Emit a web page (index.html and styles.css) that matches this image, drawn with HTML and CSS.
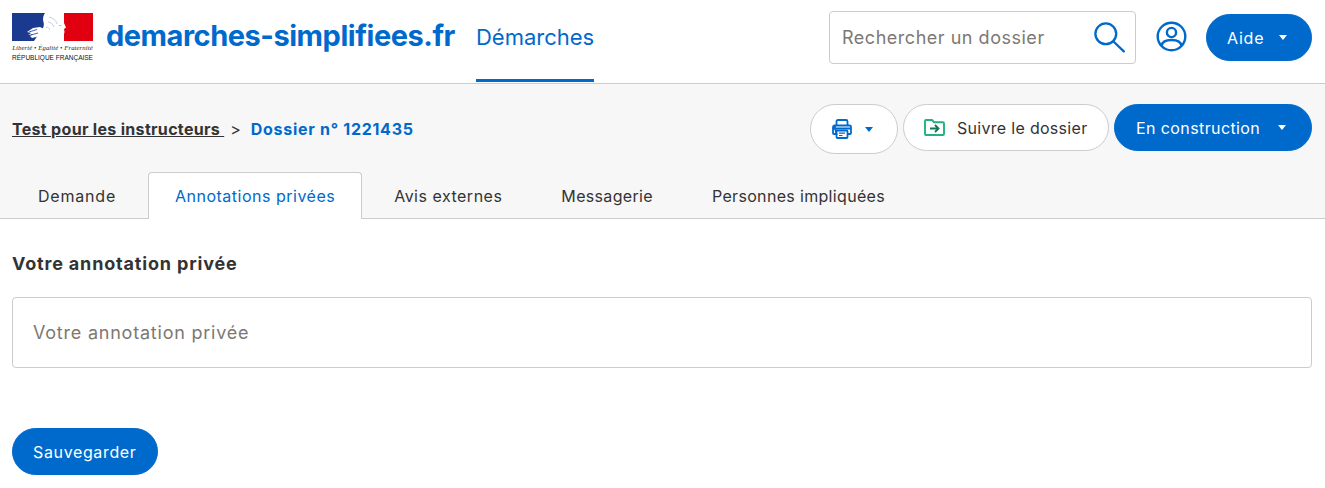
FILE: index.html
```html
<!DOCTYPE html>
<html lang="fr">
<head>
<meta charset="utf-8">
<title>Dossier</title>
<link rel="stylesheet" href="styles.css">
</head>
<body>
<header class="topbar">
  <div class="brand">
    <div class="logo">
      <svg class="logo-flag" width="81" height="28" viewBox="0 0 81 28">
        <rect width="81" height="28" fill="#fff"/>
        <path d="M0 0h33c-2 3-2.500 6-1.500 9 .5 2 .5 4-.5 6l-2 3-3 4-4 6H0z" fill="#1a3a8f"/>
        <path d="M52 0h29v28H52v-7l.5-2-.5-3 2-1.500-2-4.500z" fill="#e1000f"/>
        <path d="M15 19l6-4 7-1 4 2-3 3 3 1-4 3-8 2-2-2 3-2-5 1 3-2z" fill="#fff"/>
        <path d="M17 19l8-2.500M19 22l7-2" stroke="#1a3a8f" stroke-width=".8" fill="none"/>
        <path d="M37 4c4 1 7 3 8 7M36 9c3 .5 5 2 6 5M34 14c2 0 3 1 4 3" stroke="#b9c0dc" stroke-width=".8" fill="none"/>
        <path d="M47 12.500h2.500" stroke="#9aa" stroke-width=".7"/>
      </svg>
      <div class="logo-motto">Liberté • Égalité • Fraternité</div>
      <div class="logo-name">RÉPUBLIQUE FRANÇAISE</div>
    </div>
    <a class="site-name">demarches-simplifiees.fr</a>
    <a class="nav-tab">Démarches</a>
  </div>
  <div class="header-actions">
    <div class="search">
      <span class="search-text">Rechercher un dossier</span>
      <svg class="search-icon" width="31" height="31" viewBox="0 0 31 31" fill="none" stroke="#0069cc" stroke-width="2.300" stroke-linecap="round"><circle cx="11.800" cy="11.800" r="10.400"/><path d="M19.500 19.500L29.800 29.400"/></svg>
    </div>
    <svg class="user-icon" width="31" height="31" viewBox="0 0 31 31" fill="none" stroke="#0069cc" stroke-width="2.400"><circle cx="15.500" cy="15.500" r="13.800"/><circle cx="15.500" cy="11.500" r="4.600"/><path d="M5.500 25c.5-4 4-6 10-6s9.500 2 10 6"/></svg>
    <button class="btn btn-primary btn-help">Aide<span class="caret caret-white"></span></button>
  </div>
</header>

<section class="subheader">
  <div class="subheader-row">
    <nav class="breadcrumb">
      <a class="crumb-link">Test pour les instructeurs </a>
      <span class="crumb-sep">&gt;</span>
      <span class="crumb-current">Dossier n° 1221435</span>
    </nav>
    <div class="dossier-actions">
      <button class="btn btn-outline btn-print">
        <svg width="20" height="20" viewBox="0 0 20 20" fill="none" stroke="#0069cc"><path d="M4.500 7V2.500C4.500 1.600 5.100 1 6 1h8c.9 0 1.500.6 1.500 1.500V7" stroke-width="1.800"/><path d="M2.500 6.500h15C18.400 6.500 19 7.200 19 8.200V14c0 .5-.5 1-1 1h-2.500M4.500 15H2c-.5 0-1-.5-1-1V8.200c0-1 .6-1.700 1.500-1.700z" stroke-width="1.800"/><path d="M1 9.500h18" stroke-width="2"/><rect x="4.500" y="11.500" width="11" height="7.500" rx="1" stroke-width="1.800"/><path d="M7 14.200h6M7 16.500h3.500" stroke-width="1.200"/></svg>
        <span class="caret caret-blue"></span>
      </button>
      <button class="btn btn-outline btn-follow">
        <svg width="21" height="17" viewBox="0 0 21 17" fill="none"><path d="M1 15V2c0-.6.400-1 1-1h6l2 2.200h8.800c.7 0 1.200.5 1.200 1.200V15c0 .6-.4 1-1 1H2c-.6 0-1-.4-1-1z" stroke="#1fb27e" stroke-width="1.900"/><path d="M6 9.500h8M11 6l3.500 3.500L11 13" stroke="#127a55" stroke-width="1.900"/></svg>
        Suivre le dossier
      </button>
      <button class="btn btn-primary btn-status">En construction<span class="caret caret-white"></span></button>
    </div>
  </div>
  <nav class="tabs">
    <a class="tab tab-first">Demande</a>
    <a class="tab tab-active">Annotations privées</a>
    <a class="tab">Avis externes</a>
    <a class="tab tab-tight">Messagerie</a>
    <a class="tab tab-tight">Personnes impliquées</a>
  </nav>
</section>

<main class="content">
  <label class="field-label">Votre annotation privée</label>
  <div class="textarea">Votre annotation privée</div>
  <button class="btn btn-primary btn-save">Sauvegarder</button>
</main>
</body>
</html>
```
FILE: styles.css
```css
* { box-sizing: border-box; }
html, body { margin: 0; padding: 0; }
body {
  width: 1325px;
  height: 488px;
  overflow: hidden;
  background: #fff;
  color: #333;
  font-family: Inter, "Open Sans", sans-serif;
  font-size: 16px;
}
.topbar {
  height: 84px;
  padding: 0 13px 0 12px;
  display: flex;
  justify-content: space-between;
  align-items: flex-start;
  border-bottom: 1px solid #ccc;
}
.brand { display: flex; align-items: flex-start; }
.logo { width: 81px; margin-top: 13px; display: flex; flex-direction: column; align-items: center; }
.logo-flag { display: block; }
.logo-motto { font: italic 6.700px "Liberation Serif", serif; letter-spacing: .1px; color: #222; margin-top: 2px; height: 9px; line-height: 9px; white-space: nowrap; }
.logo-name { font: 6.500px "Liberation Sans", sans-serif; color: #111; margin-top: 1px; height: 10px; line-height: 10px; white-space: nowrap; }
.site-name {
  margin-left: 13px;
  margin-top: 15px;
  font-size: 29px;
  line-height: 42px;
  font-weight: 700;
  color: #0069cc;
  letter-spacing: -0.47px;
  white-space: nowrap;
}
.nav-tab {
  margin-left: 21px;
  padding-top: 22px;
  font-size: 22px;
  line-height: 30px;
  color: #0069cc;
  border-bottom: 3px solid #0069cc;
  width: 118px;
  height: 82px;
  white-space: nowrap;
}
.header-actions { display: flex; align-items: flex-start; }
.search {
  margin-top: 11px;
  width: 307px;
  height: 53px;
  border: 1px solid #ccc;
  border-radius: 4px;
  padding: 0 10px 0 12px;
  display: flex;
  align-items: center;
  justify-content: space-between;
}
.search-text { font-size: 18px; letter-spacing: .52px; color: #7d7873; }
.user-icon { margin: 21px 0 0 20px; }
.btn {
  font-family: inherit;
  font-size: 16px;
  border-radius: 30px;
  border: 1px solid #ccc;
  display: inline-flex;
  align-items: center;
  cursor: pointer;
  white-space: nowrap;
  padding: 0;
}
.btn-primary { background: #0069cc; border-color: #0069cc; color: #fff; }
.btn-outline { background: #fff; color: #333; }
.btn-help { margin: 14px 0 0 19px; width: 106px; height: 47px; padding-left: 20px; letter-spacing: .8px; }
.caret { display: inline-block; width: 0; height: 0; border-left: 4px solid transparent; border-right: 4px solid transparent; border-top: 5px solid; }
.caret-white { border-top-color: #fff; margin-left: 15px; }
.caret-blue { border-top-color: #0069cc; margin-left: 13px; }
.subheader {
  height: 135px;
  background: #f7f7f7;
  border-bottom: 1px solid #ccc;
  padding: 20px 13px 0 12px;
  display: flex;
  flex-direction: column;
  justify-content: space-between;
}
.subheader-row { display: flex; justify-content: space-between; align-items: flex-start; }
.breadcrumb { margin-top: 14px; display: flex; font-size: 16px; line-height: 22px; font-weight: 700; white-space: pre; }
.crumb-link { text-decoration: underline; color: #333; letter-spacing: .31px; }
.crumb-sep { margin-left: 6px; font-weight: 400; }
.crumb-current { margin-left: 10px; color: #0069cc; letter-spacing: .72px; }
.dossier-actions { display: flex; gap: 5px; align-items: flex-start; }
.btn-print { width: 88px; height: 50px; padding-left: 21px; }
.btn-follow { width: 206px; height: 47px; padding-left: 20px; gap: 12px; letter-spacing: .3px; }
.btn-status { width: 198px; height: 47px; padding-left: 21px; letter-spacing: .4px; }
.btn-status .caret { margin-left: 18px; }
.tabs { display: flex; gap: 5px; height: 47px; margin: 0 0 -1px -1px; align-items: flex-end; }
.tab {
  height: 47px;
  line-height: 47px;
  padding: 0 26px;
  color: #333;
  letter-spacing: .5px;
  border: 1px solid transparent;
  border-bottom: 0;
  border-radius: 4px 4px 0 0;
  white-space: nowrap;
}
.tab-first { width: 132px; letter-spacing: .8px; }
.tab-tight { letter-spacing: .33px; }
.tab-active { background: #fff; color: #0069cc; border-color: #ccc; }
.content { padding: 32px 13px 0 12px; display: flex; flex-direction: column; align-items: flex-start; }
.field-label { font-size: 18px; line-height: 24px; font-weight: 700; color: #333; letter-spacing: .83px; position: relative; top: 1px; }
.textarea {
  margin-top: 22px;
  width: 100%;
  height: 71px;
  border: 1px solid #ccc;
  border-radius: 4px;
  padding: 0 20px;
  display: flex;
  align-items: center;
  font-size: 18px;
  letter-spacing: .78px;
  color: #7d7873;
}
.btn-save { margin-top: 60px; height: 47px; width: 146px; padding-left: 20px; letter-spacing: .64px; }
```
